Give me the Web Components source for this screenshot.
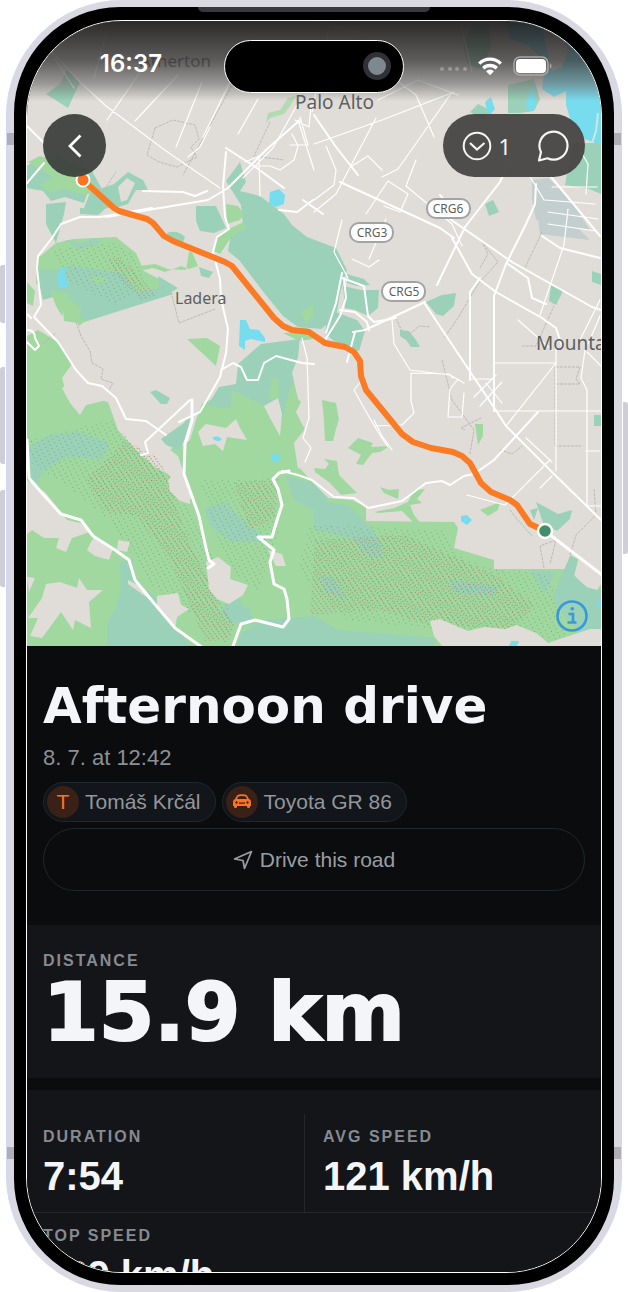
<!DOCTYPE html>
<html lang="en">
<head>
<meta charset="utf-8">
<meta name="viewport" content="width=device-width, initial-scale=1">
<title>Afternoon drive</title>
<style>
  body { margin: 0; background: #fff; font-family: "Liberation Sans", Arial, sans-serif; }
</style>
</head>
<body>
<phone-frame>
  <route-map>
    <status-bar slot="status"></status-bar>
    <map-actions slot="actions" count="1"></map-actions>
  </route-map>
  <trip-header>
    <span slot="title">Afternoon drive</span>
    <span slot="date">8. 7. at 12:42</span>
    <info-chip slot="chips"><span slot="icon">T</span>Tomáš Krčál</info-chip>
    <info-chip slot="chips">
      <svg slot="icon" width="20" height="18" viewBox="0 0 20 18" aria-hidden="true">
        <path fill="#fa7426" fill-rule="evenodd" d="M5 2.500Q6 1.300 10 1.300T15 2.500L17 6q2 .5 2 3v4h-1v1q0 1-1.500 1T15 14v-1H5v1q0 1-1.500 1T2 14v-1H1V9q0-2.500 2-3zM6.300 3.500 5 6h10l-1.300-2.500Q10 2.500 6.300 3.500zM4.500 8.300a1.200 1.200 0 1 0 .01 0zm11 0a1.200 1.200 0 1 0 .01 0zM7 9.500v1.300h6V9.500z"/>
      </svg>Toyota GR 86</info-chip>
  </trip-header>
  <distance-panel><span slot="label">Distance</span>15.9 km</distance-panel>
  <stat-grid>
    <stat-row>
      <stat-tile><span slot="label">Duration</span>7:54</stat-tile>
      <stat-tile><span slot="label">Avg speed</span>121 km/h</stat-tile>
    </stat-row>
    <stat-row>
      <stat-tile><span slot="label">Top speed</span>189 km/h</stat-tile>
    </stat-row>
  </stat-grid>
</phone-frame>

<script>
const define = (name, html, setup) => {
  const template = document.createElement('template');
  template.innerHTML = html;
  customElements.define(name, class extends HTMLElement {
    constructor() {
      super();
      this.attachShadow({ mode: 'open' }).append(template.content.cloneNode(true));
    }
    connectedCallback() { if (setup) setup(this, this.shadowRoot); }
  });
};

define('phone-frame', `
<style>
  :host { display: block; position: relative; box-sizing: border-box; height: 100vh; padding: 0 6px; overflow: hidden; }
  .shell { position: relative; box-sizing: border-box; height: 100%; padding: 7px; border: 0 solid #cbdafc; border-width: 0 1px; border-radius: 116px; background: #dad8e0; overflow: hidden; }
  .bezel { position: relative; box-sizing: border-box; height: 100%; padding: 13px 12px 12px; border-radius: 106px; background: #000; }
  .screen { box-sizing: border-box; height: 100%; border: 1px solid #fff; border-radius: 96px; background: #0b0c0e; overflow: hidden; }
  .band { position: absolute; left: 0; right: 0; height: 12px; background: #b0adb7; }
  .band.top { top: 133px; } .band.bottom { bottom: 133px; }
  .ear { position: absolute; top: 0; left: 50%; width: 232px; height: 5px; margin-left: -116px; background: #39383e; border-radius: 0 0 8px 8px; }
  .key { position: absolute; width: 5px; background: #cfcdd5; }
  .l { left: 0; border-radius: 3px 0 0 3px; } .r { right: 0; border-radius: 0 3px 3px 0; }
  .mute { top: 265px; height: 58px; } .up { top: 367px; height: 97px; }
  .down { top: 490px; height: 97px; } .power { top: 402px; height: 152px; }
</style>
<div class="shell">
  <div class="band top"></div><div class="band bottom"></div>
  <div class="bezel"><div class="ear"></div><main class="screen"><slot></slot></main></div>
</div>
<div class="key l mute"></div><div class="key l up"></div><div class="key l down"></div><div class="key r power"></div>
`);

define('status-bar', `
<style>
  :host { display: block; position: absolute; inset: 0 0 auto; color: #fff; background: linear-gradient(#201f1ff0, #292828e0 20%, #3c3b3bc8 50%, #6a696999 78%, #e0ddd800); }
  .bar { display: grid; grid-template-columns: 1fr 180px 1fr; align-items: center; height: 80px; padding: 6px 0 8px; box-sizing: border-box; }
  time { justify-self: end; margin: 8px 62px 0 0; font: 600 24px/32px Inter, sans-serif; }
  .island { display: flex; align-items: center; justify-content: flex-end; box-sizing: border-box; height: 53px; margin-top: 12px; padding-right: 12px; border: 1px solid #fff; border-radius: 27px; background: #000; }
  .lens { width: 18px; height: 18px; border: 5px solid #303036; border-radius: 50%; background: #7d898e; }
  .icons { display: flex; align-items: center; gap: 10px; margin: 12px 0 0 35px; }
  .icons svg:first-child { align-self: flex-end; }
</style>
<div class="bar">
  <time>16:37</time>
  <div class="island"><div class="lens"></div></div>
  <div class="icons">
    <svg width="28" height="14" viewBox="0 0 28 14" fill="#9b9996"><circle cx="3" cy="7" r="2"/><circle cx="11" cy="7" r="2"/><circle cx="18" cy="7" r="2"/><circle cx="26" cy="7" r="2"/></svg>
    <svg width="26" height="20" viewBox="0 0 26 20" fill="none" stroke="#fff" stroke-width="3.400"><path d="M2.200 7.600a15.300 15.300 0 0 1 21.600 0"/><path d="M6.300 12.200a9.600 9.600 0 0 1 13.400 0"/><path stroke="none" fill="#fff" d="M9 15.300a5.500 5.500 0 0 1 8 0L13 19.300z"/></svg>
    <svg width="41" height="20" viewBox="0 0 41 20"><rect x="1" y="1" width="34" height="18" rx="6" fill="none" stroke="#aaa8a6" stroke-width="1.500"/><rect x="3" y="3" width="30" height="14" rx="4" fill="#fff"/><path d="M37 7q3 3 0 6z" fill="#aaa8a6"/></svg>
  </div>
</div>
`);

define('map-actions', `
<style>
  :host { display: flex; justify-content: space-between; position: absolute; left: 16px; right: 16px; top: 93px; }
  button { display: flex; align-items: center; justify-content: center; margin: 0; padding: 0; border: 0; background: none; color: #f5f5f5; font: 22px/24px "Noto Sans", sans-serif; }
  .back { width: 63px; height: 63px; border-radius: 50%; background: #3c403bf0; }
  .group { display: flex; align-items: center; gap: 26px; box-sizing: border-box; height: 63px; padding: 0 16px 0 19px; border-radius: 32px; background: #474645f4; }
  .count { gap: 6px; }
</style>
<button class="back" aria-label="Back"><svg width="16" height="24" viewBox="0 0 16 24" fill="none" stroke="#fff" stroke-width="2.800"><path d="M13.500 1.500 3 12l10.500 10.500"/></svg></button>
<div class="group">
  <button class="count"><svg width="30" height="30" viewBox="0 0 30 30" fill="none" stroke="#f5f5f5" stroke-width="2"><circle cx="15" cy="15" r="13.300"/><path d="m8 12 7 6.500 7.500-6.500" stroke-width="2.200"/></svg><span></span></button>
  <button aria-label="Comments"><svg width="32" height="32" viewBox="0 0 32 32" fill="none" stroke="#f5f5f5" stroke-width="2.200" stroke-linejoin="round"><path d="M2 30.500 4 22A14 14 0 1 1 10.500 28.300Z"/></svg></button>
</div>
`, (host, root) => { root.querySelector('.count span').textContent = host.getAttribute('count'); });

define('route-map', `
<style>
  :host { display: block; position: relative; background: #e0ddd8; }
  svg.map { display: block; width: 100%; height: auto; }
  .teal { fill: #9ad1b8; } .green { fill: #a0d8a0; } .water { fill: #78dcef; } .land { fill: #e0ddd8; }
  .dots { fill: url(#dots); } .brown { fill: url(#brown); }
  .road, .thin, .main { fill: none; stroke: #fff; stroke-width: 2; stroke-linejoin: round; stroke-linecap: round; }
  .thin { stroke-width: 1.200; } .main { stroke-width: 3; }
  .edge { fill: none; stroke: #bcb9b6; stroke-width: 1; stroke-dasharray: 3 1; }
  text { font-family: "Noto Sans", "Open Sans", sans-serif; fill: #5f5f5f; }
  .info { position: absolute; right: 13px; bottom: 14px; width: 32px; height: 32px; margin: 0; padding: 0; border: 0; background: none; }
  .info svg { display: block; }
</style>
<svg class="map" viewBox="27 21 574 625" role="img" aria-label="Route map">
  <defs>
    <pattern id="dots" width="5" height="4" patternUnits="userSpaceOnUse" patternTransform="rotate(-28)"><rect width="1" height="1" fill="#74ad74"/></pattern>
    <pattern id="brown" width="4" height="3" patternUnits="userSpaceOnUse" patternTransform="rotate(-35)"><rect width="1.100" height="1.100" fill="#a98b6b"/></pattern>
  </defs>
  <!-- bay and marsh, upper right -->
  <path class="teal" d="M463 45l10-22 16 2 2 22-10 22-13-4zM508 85l26-6 6 20-6 12-14 2-12 0zM470 112l8-8 12 6-6 10z"/>
  <path class="water" d="M500 21h101v124l-16-6-13-14-6-20 0-14-12 6-12-8 2-16 10-10-14-6-12-12-18-6-4-14-10-8zM485 102l6-5 4 12-7 8zM533 84l3 24-8 4-2-8z"/>
  <path class="land" d="M540 21h20l8 30-6 16-10 4zM576 26l14 6-8 22z"/>
  <path class="teal" d="M572 143l29 0v51l-12-5-24-4z"/>
  <path d="M598 113l-2 18-4 12" fill="none" stroke="#cfe6e2" stroke-width="2"/>
  <path fill="#9fbfc3" opacity=".45" d="M532 180l16-2 20 18 22 34-54-10-4-20zM536 206l28 8 26 26-50-6z"/>
  <!-- parks -->
  <path class="teal" d="M68 68l12 14-12 26-22-14 14-10zM27 166l12-8 14 5 4-10 13 10 22 8 12 22-16-2-4 12-19-6-14 4-8-10-16-3z"/>
  <path class="green" d="M28 162l12-6 14 5 14 6 16 4 14 20-14 4-20-6-14 4-10-8 12-8z"/>
  <path class="teal" d="M46 204l20-2-2 12-8 29-10-19zM114 184l14-12 15 8 5 10-12 0-8 14-10 3-8 0-16 7-10-6 6-15 10-4zM80 208l24 2-6 5-18-1zM196 206l20 0 10 22-12 5-14-2-4-10z"/>
  <path fill="#e0ddd8" d="M118 187l9-9 8 5-8 17-6 2z"/>
  <path class="teal" d="M226 181l14-19 6 20-6 9 20 5 24 18 8 11 15 12 29 11 11 22-7 24-4 23-15 12-23-2-15-11-18-22-26-34-11-9 3-18 12-7-2-21z"/>
  <path class="green" d="M226 204l12 2 6 8-4 6-13 4zM226 230l18-8 2 6-14 8-12 18-6-3 4-15zM300 313l13-9v11l-7 9zM283 333l15-1 4-5 8 2 3 10-14 2z"/>
  <path class="teal" d="M347 274l17 5 6 6-13 1-10-3zM343 286l18 4 18 0-1 18-10 8-13-6-10-2zM330 310l27 10 8 11-6 20-5-2-13-3-16-12 2-17z"/>
  <path class="green" d="M38 258l18-15 17-4 43-2 20 16 8 18 32 17-33 14-32 1-33 20-14-2-2-27-16-1-10-10z"/>
  <path class="teal" d="M38 270l20-1 15-4 24 5 25 3 15 19 22-4 14 6-95 30 4-15-12-10-10-4-17 5-4-16zM65 240l18 3 12-5 6 4-22 8zM158 276l20 12-17 10z"/>
  <path class="green" d="M90 278l12-2 6 6-12 2zM50 290l20 4-8 22-6-10zM74 316l12 4-7 6z"/>
  <path class="brown" d="M108 260l10-3 20 17 18 22-14 4-28-26z"/><path class="dots" d="M50 250l65-8 20 15 10 28-30 20-50-25z"/>
  <path class="water" d="M61 267l4 1 0 13 6 0-6 7-6 0-1-10zM240 320l6 0 4 9 9 1 6 8 0 4-14-3-6 2 0 9-6-4z"/>
  <path class="water" d="M270 192l9-3 6 6-1 9-8 3-7-3z"/>
  <path class="teal" d="M167 233q10-4 18 4l-3 8-14-6zM199 267l14 5-4 6-8-2zM150 392l6-2 14 8-3 6-6 0z"/>
  <path class="green" d="M187 339l20-1 13 8-4 20zM139 266l16-2 13 5 18 1 3-18 3 0 6 14-9 3-8-3-16 6-12-4-8 2z"/>
  <path class="teal" d="M426 302l16-7 14-2-2 13-11 10-7-2zM400 330l9 1 7 9 4 7-9 0-5-7-6-4zM551 285l12 6-7 14-7-4zM592 271l9 3v11l-9-3zM594 415h7v11h-7zM485 204l8-4 6 12-10 4z"/>
  <path class="green" d="M322 400l14 3 2 12 1 4-3 10-3 12-8 0-1-20zM348 448l10-10 15 5-2 4 19-1-10 6-8 1-9 12-7-1 5-9zM314 468l11 1 4-5-5-5 13 2 2 14 18 18-16 2-11-12-15-11zM475 424l8 0 0 12-5 9z"/>
  <!-- hills -->
  <path class="green" d="M27 282l8 9-2 15-6-3z"/>
  <path class="green" d="M27 336L38 330 58 342 72 364 62 378 66 392 108 402 118 430 136 450 156 468 168 474 176 484 180 500 194 498 186 480 178 456 170 450 178 424 192 416 188 430 182 446 190 440 196 420 202 404 214 398 222 388 238 384 262 376 282 372 304 380 302 400 296 412 310 440 298 466 314 484 328 498 352 500 366 507 366 521 454 522 458 528 454 548 494 560 494 569 568 569 570 555 578 559 574 575 586 587 597 590 601 584V646H27z"/>
  <path class="land" d="M158 420L192 400 184 424 176 434 178 444 170 450 164 466 144 450 148 438z"/>
  <path class="teal" d="M161 439l30-21-7 22-5 10-13-5zM219 387l17-3 2-20 23-20 39-5-3 37-7 14-10 36-12 0-11-9-12-10-23 1-14-3z"/>
  <path class="green" d="M272 378l6-1 1 20-10 3zM232 390l40 20 20 30-22 8-20-20-20-10z"/>
  <path class="land" d="M300 339l14 26 2 90-18 14-4-26 14-18-4-20-6-6-6-26 6-16zM264 406l14-8 4 16-2 22-10-18z"/>
  <path class="teal" d="M29 447l20-12 29-3 32 11-8 16-36-2-22 14-10 16-2 4zM29 494l11-2-4 7-8 2zM120 563l12-6 3 22 20 18 36 50-84-1 0-22 10-20 4-18zM205 508l20-6 25 24 20 14-12 2-26 0-22-16zM225 598l14-2 4 14-12 14zM286 476l28 8 14 14-14 12-20-10zM314 500l36 6 26 28 8 24-12 0-22-20-36-8z"/>
  <path class="teal" d="M530 570l25 2-10 22zM552 598l18-42 8 4-4 16 14 12 13 3v40h-21l-12-10zM220 610l14-10 16 10 4 16-24-4zM240 634l24-14 50-4 24 14 96 8 0 8-196 0zM450 580l48 6-4 10-40-4zM320 576l14 2 12 22-20-8z"/>
  <!-- forest shading -->
  <path class="dots" d="M30 440l80-20 28 28 40 35 45 90 10 70-85-60-35-60-50-40-32-20zM200 480l65 0 15 50-22 60-30-20zM310 525l60 2 76 4 8 22 34 15 60 6 20 66-120-10-100-10-50-50z"/>
  <path class="brown" d="M85 480l20-18 20-22 34 18 10 25 16 50 30 60 14 48-24 0-34-80-34-45-32-4zM234 483l45-5-4 40-25 12zM315 540l90-5 90 40 40 30-25 25-80-5-50-15-70 5zM205 620l20-10 10 15-10 20z"/>
  <!-- clearings -->
  <path class="land" d="M27 480l18 12 22 28 18 4 5 8-18 6-6 14-10-4 3-10-15 0-12-8-5 4zM95 536l18 12-4 12-14-4-8-6 4-8zM118 540l12 2-3 10-10-2zM27 577l8 1-6 14zM46 584l14-2 17 6 2-10 8 12 16 0-14 12 2 26-16-8-2 10-12-18-19 26-12-2 8-18-10 0 14-20zM128 580l16 8 10 14-12-8-14-10zM157 596l21-3 3 12 8 4-12 8-2 12-18-24zM206 562l12-5 13 10-1 12 18 6-5 10-14 9-12-5-8-10zM168 480l10-8 12 14 0 18-10-3-10-10zM198 432l8-8 20 4 10-9 4 9 7 12-20-3-4 14-8-7-12 2zM62 388l14-8 8 12 18-1 1 10-17 4-6 10-10-12zM268 550l14 4 4 12-10 0z"/>
  <path class="land" d="M430 621l10-2 14 6 14 6 16-4 22 2 10-4 20 8 12 10 30-10 12-4 11 0v17H442l-8-10z"/>
  <path class="green" d="M374 512l20-4 14-6 6-12 11-1-8 10 5 4-12 2 4 10 8 10-8-2-12-12-24 2zM380 487l9 3 10-1-1 10-14-6zM480 510l20-8-2 8-10 6z"/>
  <path class="teal" d="M536 502l22 12 14-4-2 9-13 12-14-8zM530 510l8-2-4 12z"/>
  <path class="water" d="M461 516l6-1 5 5-5 5-6-4zM595 604l6-3v6zM511 641h8l-2 5h-8zM272 454l9 1-2 7-8-1zM212 438q5-4 10 1-4 5-10-1z"/>
  <path class="green" d="M296 96l-6 10-6 8-14 4-4 5 2-10 12-3 8-12z" opacity=".7"/>
  <!-- boundaries -->
  <path class="edge" d="M155 128l18-8 22 5 4 14-8 8 6 10-20 10-18-5-12-7zM171 292l8 31 36-14M76 322l5 14 9 15 2 12 11 6-2 10 12 4-5 9M34 350l22-17M104 190l12-18M480 268l8-14-6-12 16 20-20 22-20 34-14 20M542 232l-18 38M396 318l9 20 14-12 11 1M555 366v80h26M556 367h24l-4 12 4 5h-24M522 346h14l18-40M465 430l-4-2 20-10M500 450l12 4 10-8M442 360l10 40 22 30-4 24M510 510l6 8 16 18M544 568l-4-22 16-6-6 24M570 555l6-20 20-20-2-26 M243 65l-60 110M270 122l-16 34 30 4"/>
  <!-- roads -->
  <path class="thin" d="M107 30L94 78M74 88L54 58M152 55L107 120M178 75L135 121M202 82l-26 65M230 82l-27 55M258 99l-20 35M188 157l12-10 10-20M50 50l30 32 26 24 60 45 54 37M297 105l-24 43-30 30M295 120l14 7 2-22M256 166h14l10 4 14-10 4-14-6-12M290 145h18l-8-28M330 22l-18 90M370 60l46 35 18 42M460 20l12 52M314 200l20-15 2-15-10-24M314 170l-16-50M416 160l-10 26 46 38 10 22M378 100l40-20 40 15M314 144l68-24 72-28M376 118l-40 76-22 18M450 95l-52 74-16 8M314 20l48 14M352 166l16-10 14 14M366 214l22-33 20 13-8 18-16-6M342 220l-8 32 14 26M369 259l17-40M352 259l17 8 10-7M500 180l20-20 24 40M260 196l-1-40-14 6"/>
  <path class="thin" d="M471 379h22M474 397l22-22M480 406l22-24M486 383l16 20M464 393l-2 24-14 0 2-28 8-10M411 373l0 28 3 12-12 12-28 1M392 320l2 24 16 26 40 5 14 8M362 380l-8 10 10 18 14 24 10 15M374 420l8 16 10 14M494 411h107M494 363h62l-50 63M556 346v125M587 352l14 14M585 350l-4 28 6 12v116h14M586 451h14M549 461l-44 44-38-10 M526 438l26 24M540 488l12-12M600 316l-12 28M580 340l20-40M540 315l24-70 4-36M518 320l34 30M411 373l38 1 4 4"/>
  <path class="road" d="M27 183l17-20M27 126l17 17M106 217l54-9 48-8 20-12 38-38 34-30M143 191l40 1 12 4 12-5M226 148l28 18 30 22M279 210l18 2 16-12M342 278l22 8 4 30 6 6 22-4M226 152l-3 35 2 30 4 12-12 8-4 15 7 27 1 20 7 30-2 24-6 24-20 35-21 10M152 208l-52 9-20 0-19 7-9 14-14 18-1 12 4 37-7 12 24 25 18 28 12 13 14 3 14 12 10 21 20 2 20 14 M31 318l-4-4M27 330q8 0 8 8l4 8-4 4-8-8M190 400l-45 42 3 11-7 2M221 370l12-7 8 4 6 13 11 0 6-17 12-7 26 7 12 1"/>
  <path class="road" d="M314 115l22 32 22 28M303 200l20 14M390 205l50 23 14 10M340 182l50 23M342 273l-6 30-10 30M344 278l2 20-6 18-15 24M340 310l15 2 12 10 2 8M355 332l-8 30M425 304l72 108 9 14 50 50 45 44M425 302l-60 28-12 2M437 285l28-58 35-45 10-24M494 411V296l12-32 20-40 9-20 1-20M542 166l58 70M512 262l80 45 9 3M512 262l-75-52M452 238l20 36 24 18 46 26 14 10 6 18M508 264l20 14 4 20 14 6M470 380V292l10-14M542 236l18 12 40 10M440 195l18 20"/>
  <path class="main" d="M27 440l2 38 12 14 20 22 20 6 12 16 22 14 14 10 6 20 18 22 22 26 28 20M233 646l8-22 14-4 28 7 6-8-2-20-3-10-10-5-4-22 4-12-16-13 14 0 6-20 4-12-4-16-5-10 6-6 10-2"/>
  <path class="road" d="M282 471l16 4 14 5 22 17 20 1 14 10 34-7 24-18 16-2 8 4 14-9 10-2 20-14 44-48"/>
  <path class="main" d="M192 400l0 20-7 24-1 30 15 42 7 32 3 12 5 4-6 4"/>
  <path class="main" d="M545 531l57 44"/>
  <path class="thin" d="M302 338l5 20 2 60-6 20 8 10-6 14M552 187h45M545 200l50 4M548 212l50 7M548 224l48 7M580 150l8 14-2 30"/>
  <!-- drive -->
  <path d="M83 180 114 208 119 211 147 219 153 223 164 236 173 241 225 262 232 266 274 318 283 326 292 330 309 332 325 343 345 347 354 352 360 361 361 376 366 390 402 434 413 442 431 448 453 452 462 456 470 463 481 483 491 492 510 500 517 505 530 524 545 531" fill="none" stroke="#fb7b25" stroke-width="6" stroke-linejoin="round"/>
  <circle cx="83" cy="180" r="6.500" fill="#fa7426" stroke="#fff" stroke-width="2"/>
  <circle cx="545" cy="531" r="7" fill="#438d68" stroke="#fff" stroke-width="2.400"/>
  <text x="140" y="67" font-size="17">Atherton</text>
  <text x="295" y="109" font-size="19">Palo Alto</text>
  <text x="175" y="304" font-size="16">Ladera</text>
  <text x="536" y="350" font-size="19">Mountain View</text>
  <g fill="#fff" stroke="#a3a2a5" stroke-width="2"><rect x="427" y="199" width="43" height="19" rx="9"/><rect x="350" y="223" width="43" height="19" rx="9"/><rect x="382" y="282" width="43" height="19" rx="9"/></g>
  <g font-size="12" text-anchor="middle"><text x="448" y="213">CRG6</text><text x="372" y="237">CRG3</text><text x="404" y="296">CRG5</text></g>
</svg>
<slot name="status"></slot>
<slot name="actions"></slot>
<button class="info" aria-label="Map information"><svg width="32" height="32" viewBox="0 0 32 32" fill="none" stroke="#3799dc"><circle cx="16" cy="16" r="14.500" stroke-width="2.600"/><path d="M12.500 14H17v8M11.500 22.500h9" stroke-width="2.600"/><circle cx="16.300" cy="8.800" r="1.800" fill="#3799dc" stroke="none"/></svg></button>
`);

define('trip-header', `
<style>
  :host { display: block; padding: 30px 16px 34px; background: #0b0c0e; color: #8b9096; }
  h1 { margin: 0 0 8px; color: #f4f5f8; font: bold 50px/60px "DejaVu Sans", sans-serif; white-space: nowrap; }
  p { margin: 0 0 10px; font-size: 22px; line-height: 28px; }
  .chips { display: flex; gap: 6px; margin-bottom: 6px; }
  button { display: flex; align-items: center; justify-content: center; gap: 7px; box-sizing: border-box; width: 100%; height: 63px; margin: 0; border: 1px solid #20282b; border-radius: 32px; background: none; color: #9a9ea3; font: 21px/28px "Liberation Sans", sans-serif; }
</style>
<h1><slot name="title"></slot></h1>
<p><slot name="date"></slot></p>
<div class="chips"><slot name="chips"></slot></div>
<button><svg width="20" height="20" viewBox="0 0 20 20" fill="none" stroke="#9a9ea3" stroke-width="1.700" stroke-linejoin="round"><path d="M18.500 1.500 1.500 9l8.500 1.500L11.500 18.500z"/></svg>Drive this road</button>
`);

define('info-chip', `
<style>
  :host { display: flex; align-items: center; gap: 6px; box-sizing: border-box; height: 40px; padding: 0 14px 0 3px; border: 1px solid #20282b; border-radius: 20px; background: #121519; color: #93979c; font-size: 21px; line-height: 28px; white-space: nowrap; }
  .icon { display: flex; align-items: center; justify-content: center; width: 32px; height: 32px; border-radius: 50%; background: #3a2117; color: #fa7426; }
</style>
<span class="icon"><slot name="icon"></slot></span><span><slot></slot></span>
`);

define('distance-panel', `
<style>
  :host { display: block; padding: 26px 16px 25px; background: #131518; }
  .label { margin-bottom: 2px; color: #868b91; font-weight: bold; font-size: 16px; line-height: 20px; letter-spacing: 2px; text-transform: uppercase; }
  .value { color: #f4f5f8; font: bold 80px/80px "DejaVu Sans", sans-serif; -webkit-text-stroke: 2px #f4f5f8; white-space: nowrap; }
</style>
<div class="label"><slot name="label"></slot></div>
<div class="value"><slot></slot></div>
`);

define('stat-grid', `
<style>:host { display: block; margin-top: 12px; padding-top: 24px; background: #131518; }</style>
<slot></slot>
`);

define('stat-row', `
<style>
  :host { display: grid; grid-template-columns: 1fr 1fr; gap: 18px; padding: 0 16px; border-bottom: 1px solid #24262a; }
  ::slotted(:first-child:not(:last-child)) { border-right: 1px solid #24262a; }
</style>
<slot></slot>
`);

define('stat-tile', `
<style>
  :host { display: block; padding: 13px 0 12px; white-space: nowrap; }
  .label { margin-bottom: 5px; color: #868b91; font-weight: bold; font-size: 16px; line-height: 20px; letter-spacing: 2px; text-transform: uppercase; }
  .value { color: #f4f5f8; font-weight: bold; font-size: 40px; line-height: 48px; }
</style>
<div class="label"><slot name="label"></slot></div>
<div class="value"><slot></slot></div>
`);
</script>
</body>
</html>
